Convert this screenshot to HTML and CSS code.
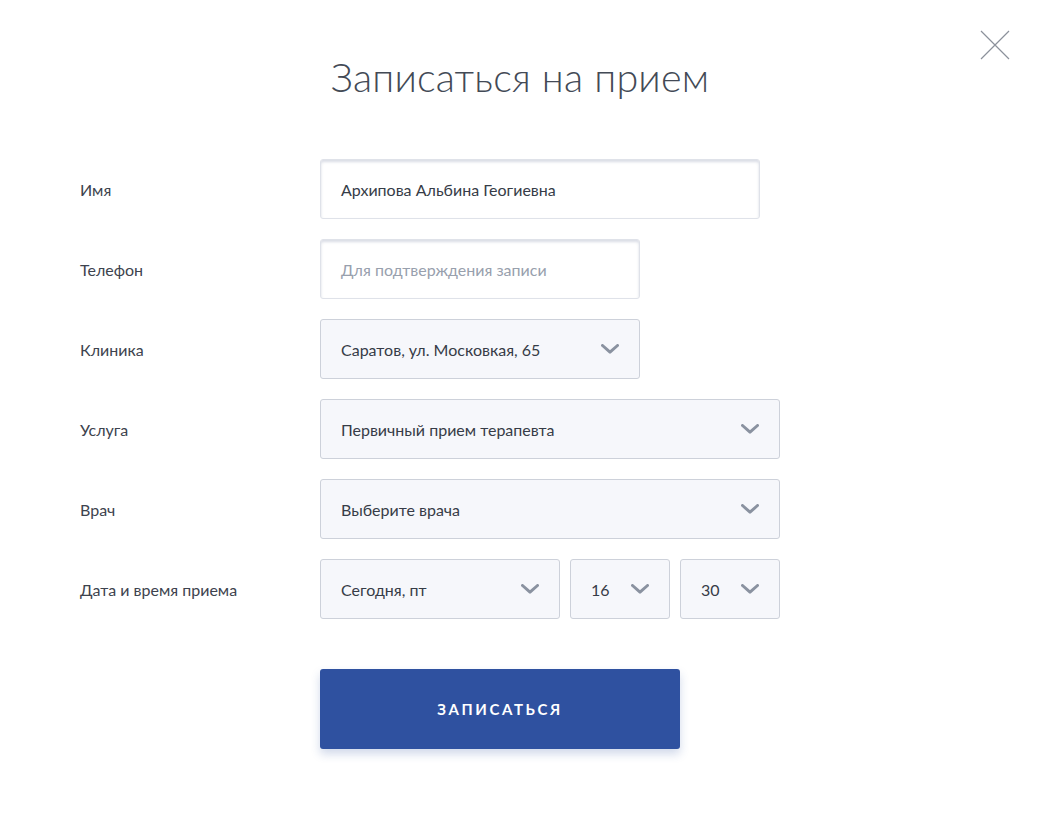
FILE: index.html
```html
<!DOCTYPE html>
<html lang="ru">
<head>
<meta charset="utf-8">
<title>Записаться на прием</title>
<link rel="stylesheet" href="styles.css">
</head>
<body>
<div class="modal">
  <button class="close" aria-label="Закрыть">
    <svg width="30" height="30" viewBox="0 0 30 30"><path d="M1 1L29 29M29 1L1 29" stroke="#8c919b" stroke-width="1.2" fill="none"/></svg>
  </button>
  <h1 class="title">Записаться на прием</h1>
  <form class="form">
    <div class="row">
      <label class="label">Имя</label>
      <div class="field input w440">Архипова Альбина Геогиевна</div>
    </div>
    <div class="row">
      <label class="label">Телефон</label>
      <div class="field input w320 placeholder">Для подтверждения записи</div>
    </div>
    <div class="row">
      <label class="label">Клиника</label>
      <div class="field select w320"><span>Саратов, ул. Московкая, 65</span><svg class="chev" viewBox="0 0 18 10"><path d="M1.5 1.5L9 8.2L16.5 1.5"/></svg></div>
    </div>
    <div class="row">
      <label class="label">Услуга</label>
      <div class="field select w460"><span>Первичный прием терапевта</span><svg class="chev" viewBox="0 0 18 10"><path d="M1.5 1.5L9 8.2L16.5 1.5"/></svg></div>
    </div>
    <div class="row">
      <label class="label">Врач</label>
      <div class="field select w460"><span>Выберите врача</span><svg class="chev" viewBox="0 0 18 10"><path d="M1.5 1.5L9 8.2L16.5 1.5"/></svg></div>
    </div>
    <div class="row">
      <label class="label">Дата и время приема</label>
      <div class="group">
        <div class="field select w240"><span>Сегодня, пт</span><svg class="chev" viewBox="0 0 18 10"><path d="M1.5 1.5L9 8.2L16.5 1.5"/></svg></div>
        <div class="field select w100"><span>16</span><svg class="chev" viewBox="0 0 18 10"><path d="M1.5 1.5L9 8.2L16.5 1.5"/></svg></div>
        <div class="field select w100"><span>30</span><svg class="chev" viewBox="0 0 18 10"><path d="M1.5 1.5L9 8.2L16.5 1.5"/></svg></div>
      </div>
    </div>
    <div class="row submit-row">
      <span class="label"></span>
      <button type="button" class="submit">Записаться</button>
    </div>
  </form>
</div>
</body>
</html>
```
FILE: styles.css
```css
* { box-sizing: border-box; }
html, body { margin: 0; padding: 0; background: #fff; }
body {
  font-family: Lato, "Open Sans", "Noto Sans", sans-serif;
  color: #3a404b;
  width: 1040px;
  height: 820px;
}
.modal {
  position: relative;
  padding-top: 52px;
}
.close {
  position: absolute;
  top: 30px;
  left: 980px;
  width: 30px;
  height: 30px;
  padding: 0;
  border: 0;
  background: none;
  display: block;
}
.close svg { display: block; }
.title {
  margin: 0;
  text-align: center;
  font-weight: 300;
  font-size: 39.5px;
  line-height: 50px;
  color: #434a56;
  letter-spacing: 0.2px;
}
.form {
  margin-top: 57px;
  display: flex;
  flex-direction: column;
  gap: 20px;
  padding-left: 80px;
}
.row {
  display: flex;
  align-items: center;
  height: 60px;
}
.label {
  width: 240px;
  font-size: 16px;
  color: #3d434e;
}
.group { display: flex; gap: 10px; }
.field {
  height: 60px;
  border-radius: 3px;
  font-size: 16px;
  display: flex;
  align-items: center;
  padding-left: 20px;
  color: #363c47;
}
.input {
  background: #fff;
  border: 1px solid #dfe2e9;
  box-shadow: inset 0 2px 3px rgba(120, 130, 160, 0.28);
}
.placeholder { color: #98a0ad; }
.select {
  background: #f6f7fb;
  border: 1px solid #cdd1da;
  justify-content: space-between;
  padding-right: 20px;
}
.chev {
  width: 18px;
  height: 10px;
  fill: none;
  stroke: #8a92a0;
  stroke-width: 3;
  stroke-linecap: round;
  stroke-linejoin: round;
  flex: none;
}
.w440 { width: 440px; }
.w320 { width: 320px; }
.w460 { width: 460px; }
.w240 { width: 240px; }
.w100 { width: 100px; }
.submit-row { height: 80px; margin-top: 30px; }
.submit {
  width: 360px;
  height: 80px;
  border: 0;
  border-radius: 3px;
  background: #2f51a0;
  color: #fff;
  font-family: Lato, "Open Sans", sans-serif;
  font-weight: 700;
  font-size: 15px;
  letter-spacing: 2.6px;
  text-transform: uppercase;
  box-shadow: 0 5px 10px rgba(47, 81, 160, 0.22);
}
```
